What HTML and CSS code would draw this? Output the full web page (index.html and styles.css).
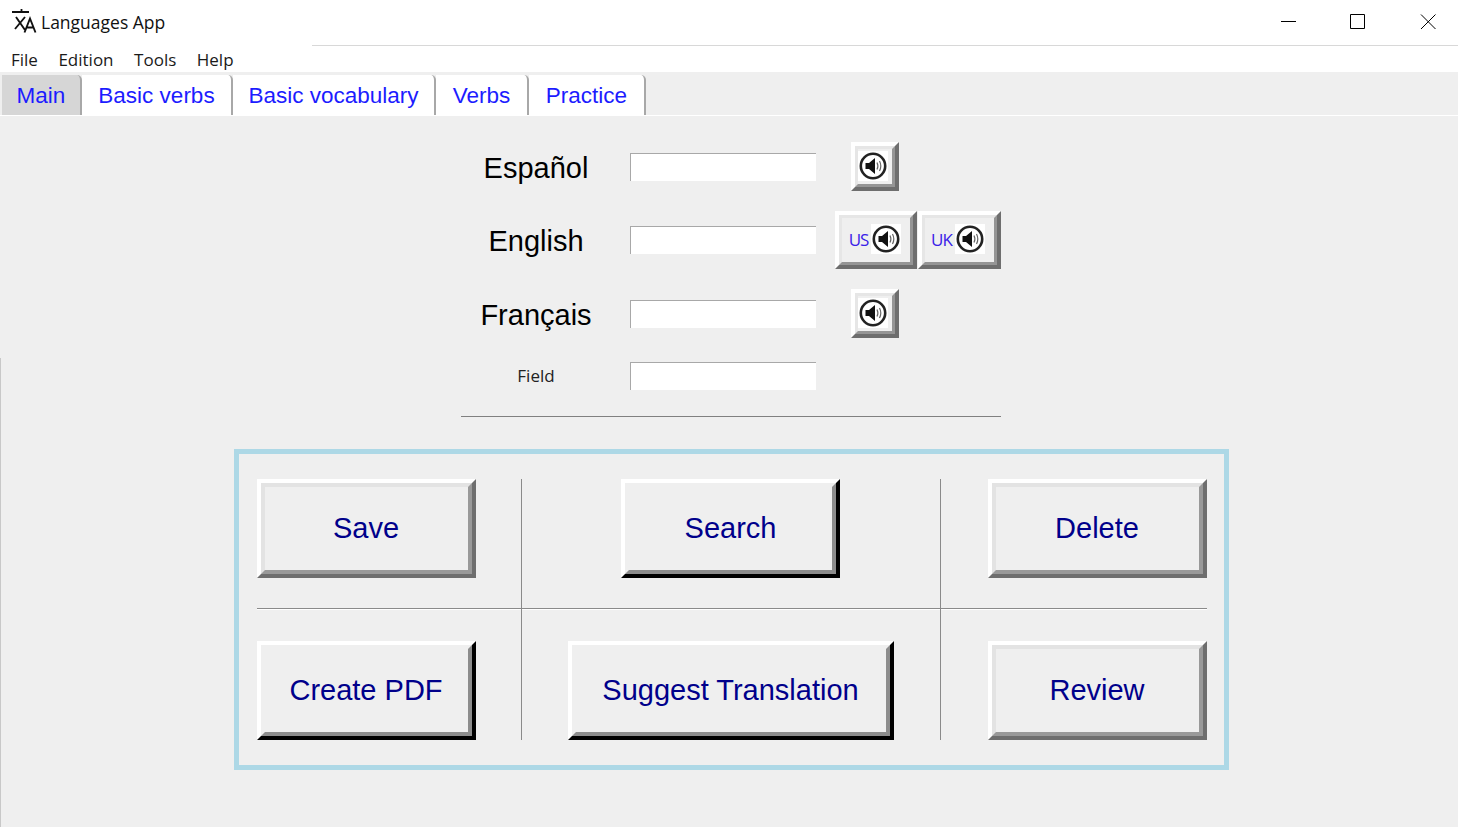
FILE: index.html
```html
<!DOCTYPE html>
<html lang="en">
<head>
    <meta charset="UTF-8">
    <title>Languages App</title>
    <link rel="stylesheet" href="styles.css">
</head>
<body>
    <svg class="sprites" width="0" height="0">
        <symbol id="speaker" viewBox="0 0 30 30">
            <rect width="30" height="30" fill="#fff"/>
            <circle cx="15" cy="15" r="12.2" fill="#fff" stroke="#222" stroke-width="2.6"/>
            <path d="M7.500 12h3.500l6-5v16l-6-5H7.500z" fill="#111"/>
            <path d="M19 11.500q1.800 3.500 0 7M21.500 10q2.600 5 0 10" fill="none" stroke="#666" stroke-width="1.2"/>
        </symbol>
    </svg>

    <div class="titlebar">
        <div class="app-title">
            <svg class="app-icon" width="25" height="25" viewBox="0 0 25 25">
                <path d="M0 3h17M9.500 0v3" fill="none" stroke="#111" stroke-width="1.8"/>
                <path d="M4 8l9 13M13 8L3 20" fill="none" stroke="#111" stroke-width="1.9"/>
                <path d="M12.500 23.500L18 9.500l5.500 14M14.500 18.500h7" fill="none" stroke="#111" stroke-width="1.9"/>
            </svg>
            <span>Languages App</span>
        </div>
        <div class="window-controls">
            <svg class="win-btn" width="16" height="16" viewBox="0 0 16 16"><path d="M1 7.500h15" stroke="#000"/></svg>
            <svg class="win-btn" width="16" height="16" viewBox="0 0 16 16"><path d="M.5.5h14v14H.5z" fill="none" stroke="#000"/></svg>
            <svg class="win-btn" width="16" height="16" viewBox="0 0 16 16"><path d="M1 .5l14.500 14.500M15.500 .5L1 15" fill="none" stroke="#000"/></svg>
        </div>
    </div>

    <nav class="menubar">
        <span>File</span>
        <span>Edition</span>
        <span>Tools</span>
        <span>Help</span>
    </nav>

    <div class="tabs">
        <a class="tab active">Main</a>
        <a class="tab">Basic verbs</a>
        <a class="tab">Basic vocabulary</a>
        <a class="tab">Verbs</a>
        <a class="tab">Practice</a>
    </div>

    <main class="content">
        <section class="form">
            <label class="lang">Español</label>
            <div class="entry"></div>
            <button class="sound"><svg width="30" height="30"><use href="#speaker"/></svg></button>
            <span></span>

            <label class="lang">English</label>
            <div class="entry"></div>
            <button class="sound wide"><span>US</span><svg width="30" height="30"><use href="#speaker"/></svg></button>
            <button class="sound wide"><span>UK</span><svg width="30" height="30"><use href="#speaker"/></svg></button>

            <label class="lang">Français</label>
            <div class="entry"></div>
            <button class="sound"><svg width="30" height="30"><use href="#speaker"/></svg></button>
            <span></span>

            <label class="field">Field</label>
            <div class="entry last"></div>
        </section>

        <hr class="divider">

        <section class="actions">
            <div class="cell start line-b line-r"><button class="action">Save</button></div>
            <div class="cell center line-b line-r"><button class="action dark">Search</button></div>
            <div class="cell end line-b"><button class="action">Delete</button></div>
            <div class="cell start line-r"><button class="action dark">Create PDF</button></div>
            <div class="cell center line-r"><button class="action dark suggest">Suggest Translation</button></div>
            <div class="cell end"><button class="action">Review</button></div>
        </section>
    </main>
</body>
</html>
```

FILE: styles.css
```css
* {
    box-sizing: border-box;
}

body {
    margin: 0;
    height: 827px;
    overflow: hidden;
    background-color: #efefef;
    font-family: "Liberation Sans", Arial, sans-serif;
    display: flex;
    flex-direction: column;
}

.sprites {
    position: absolute;
}

.titlebar {
    height: 46px;
    background-color: #fff;
    display: flex;
    justify-content: space-between;
    position: relative;
}

.titlebar::after {
    content: "";
    position: absolute;
    left: 312px;
    right: 0;
    bottom: 0;
    height: 1px;
    background-color: #d8d8d8;
}

.app-title {
    display: flex;
    align-items: flex-start;
    gap: 4px;
    padding: 9px 0 0 12px;
    font-family: "Open Sans", sans-serif;
    font-size: 17.5px;
    line-height: 27px;
    color: #111;
}

.window-controls {
    display: flex;
    gap: 54px;
    padding: 14px 22px 0 0;
}

.win-btn {
    display: block;
}

.menubar {
    height: 26px;
    background-color: #fff;
    display: flex;
    align-items: center;
    gap: 20.500px;
    padding-left: 11px;
    font-family: "Open Sans", sans-serif;
    font-size: 17px;
    color: #1a1a1a;
}

.tabs {
    height: 44px;
    padding: 3px 0 0 2px;
    display: grid;
    grid-template-columns: 80px 151px 203px 93px 117px;
    justify-content: start;
    border-bottom: 1px solid #fff;
}

.tab {
    padding-top: 8px;
    background-color: #fff;
    border-right: 2px solid #a8a8a8;
    border-top-right-radius: 5px;
    color: #1c1cff;
    font-size: 22.500px;
    text-align: center;
}

.tab.active {
    background-color: #d6d6d6;
}

.content {
    flex: 1;
    display: flex;
    flex-direction: column;
    align-items: center;
    padding: 26px 0 0 4px;
    position: relative;
}

/* window edge, only visible on the lower part of the left side */
.content::before {
    content: "";
    position: absolute;
    left: 0;
    top: 242px;
    bottom: 0;
    width: 1px;
    background-color: #c8c8c8;
}

.form {
    display: grid;
    grid-template-columns: 169px 186px 101px 84px;
    row-gap: 20px;
    align-items: center;
    justify-items: center;
}

.lang {
    padding: 3px 19px 0 0;
    font-size: 29px;
    color: #000;
}

.field {
    padding-right: 19px;
    margin-top: 2px;
    font-family: "Open Sans", sans-serif;
    font-size: 17px;
    color: #222;
}

.entry {
    width: 186px;
    height: 28px;
    background-color: #fff;
    border-top: 1px solid #a8a8a8;
    border-left: 1px solid #a8a8a8;
}

.entry.last {
    margin-top: 4px;
}

.sound {
    position: relative;
    width: 48px;
    height: 49px;
    margin-left: 17px;
    padding: 0 4px 2px 0;
    background-color: #efefef;
    border: 4px solid;
    border-color: #fff #6e6e6e #6e6e6e #fff;
    display: flex;
    align-items: center;
    justify-content: center;
}

.sound::before {
    content: "";
    position: absolute;
    inset: 0;
    border: 3px solid;
    border-color: #e6e6e6 #959595 #959595 #e6e6e6;
}

.sound svg,
.sound span {
    position: relative;
}

.sound.wide {
    width: 82px;
    height: 58px;
    margin-left: 19px;
    padding: 0 2px 2px 0;
    gap: 3px;
    font-family: "Open Sans", sans-serif;
    font-size: 17px;
    letter-spacing: -1px;
    color: #3a22e8;
}

.sound.wide + .sound.wide {
    width: 83px;
    margin-left: 0;
}

.divider {
    width: 540px;
    margin: 26px 0 32px;
    border: 0;
    border-top: 1px solid #808080;
}

.actions {
    width: 995px;
    height: 321px;
    border: 5px solid #add8e6;
    padding: 25px 17px 25px 18px;
    display: grid;
    grid-template-columns: 265px 419px 266px;
    grid-template-rows: 130px 131px;
}

.cell {
    display: flex;
    align-items: flex-start;
}

.cell:nth-child(n+4) {
    padding-top: 32px;
}

.line-b {
    border-bottom: 1px solid #8a8a8a;
    box-shadow: 0 1px 0 #fff;
}

.line-r {
    border-right: 1px solid #8a8a8a;
}

.start {
    justify-content: flex-start;
}

.center {
    justify-content: center;
}

.end {
    justify-content: flex-end;
}

.action {
    position: relative;
    width: 219px;
    height: 99px;
    padding: 0;
    background-color: #efefef;
    border: 4px solid;
    border-color: #fff #6e6e6e #6e6e6e #fff;
    color: #00008b;
    font-family: "Liberation Sans", Arial, sans-serif;
    font-size: 29px;
}

.action::before {
    content: "";
    position: absolute;
    inset: 0;
    border: 4px solid;
    border-color: #e3e3e3 #999 #999 #e3e3e3;
}

.action.dark {
    border-color: #fff #000 #000 #fff;
}

.action.dark::before {
    border-color: #efefef #8c8c8c #8c8c8c #efefef;
}

.action.suggest {
    width: 326px;
}
```
